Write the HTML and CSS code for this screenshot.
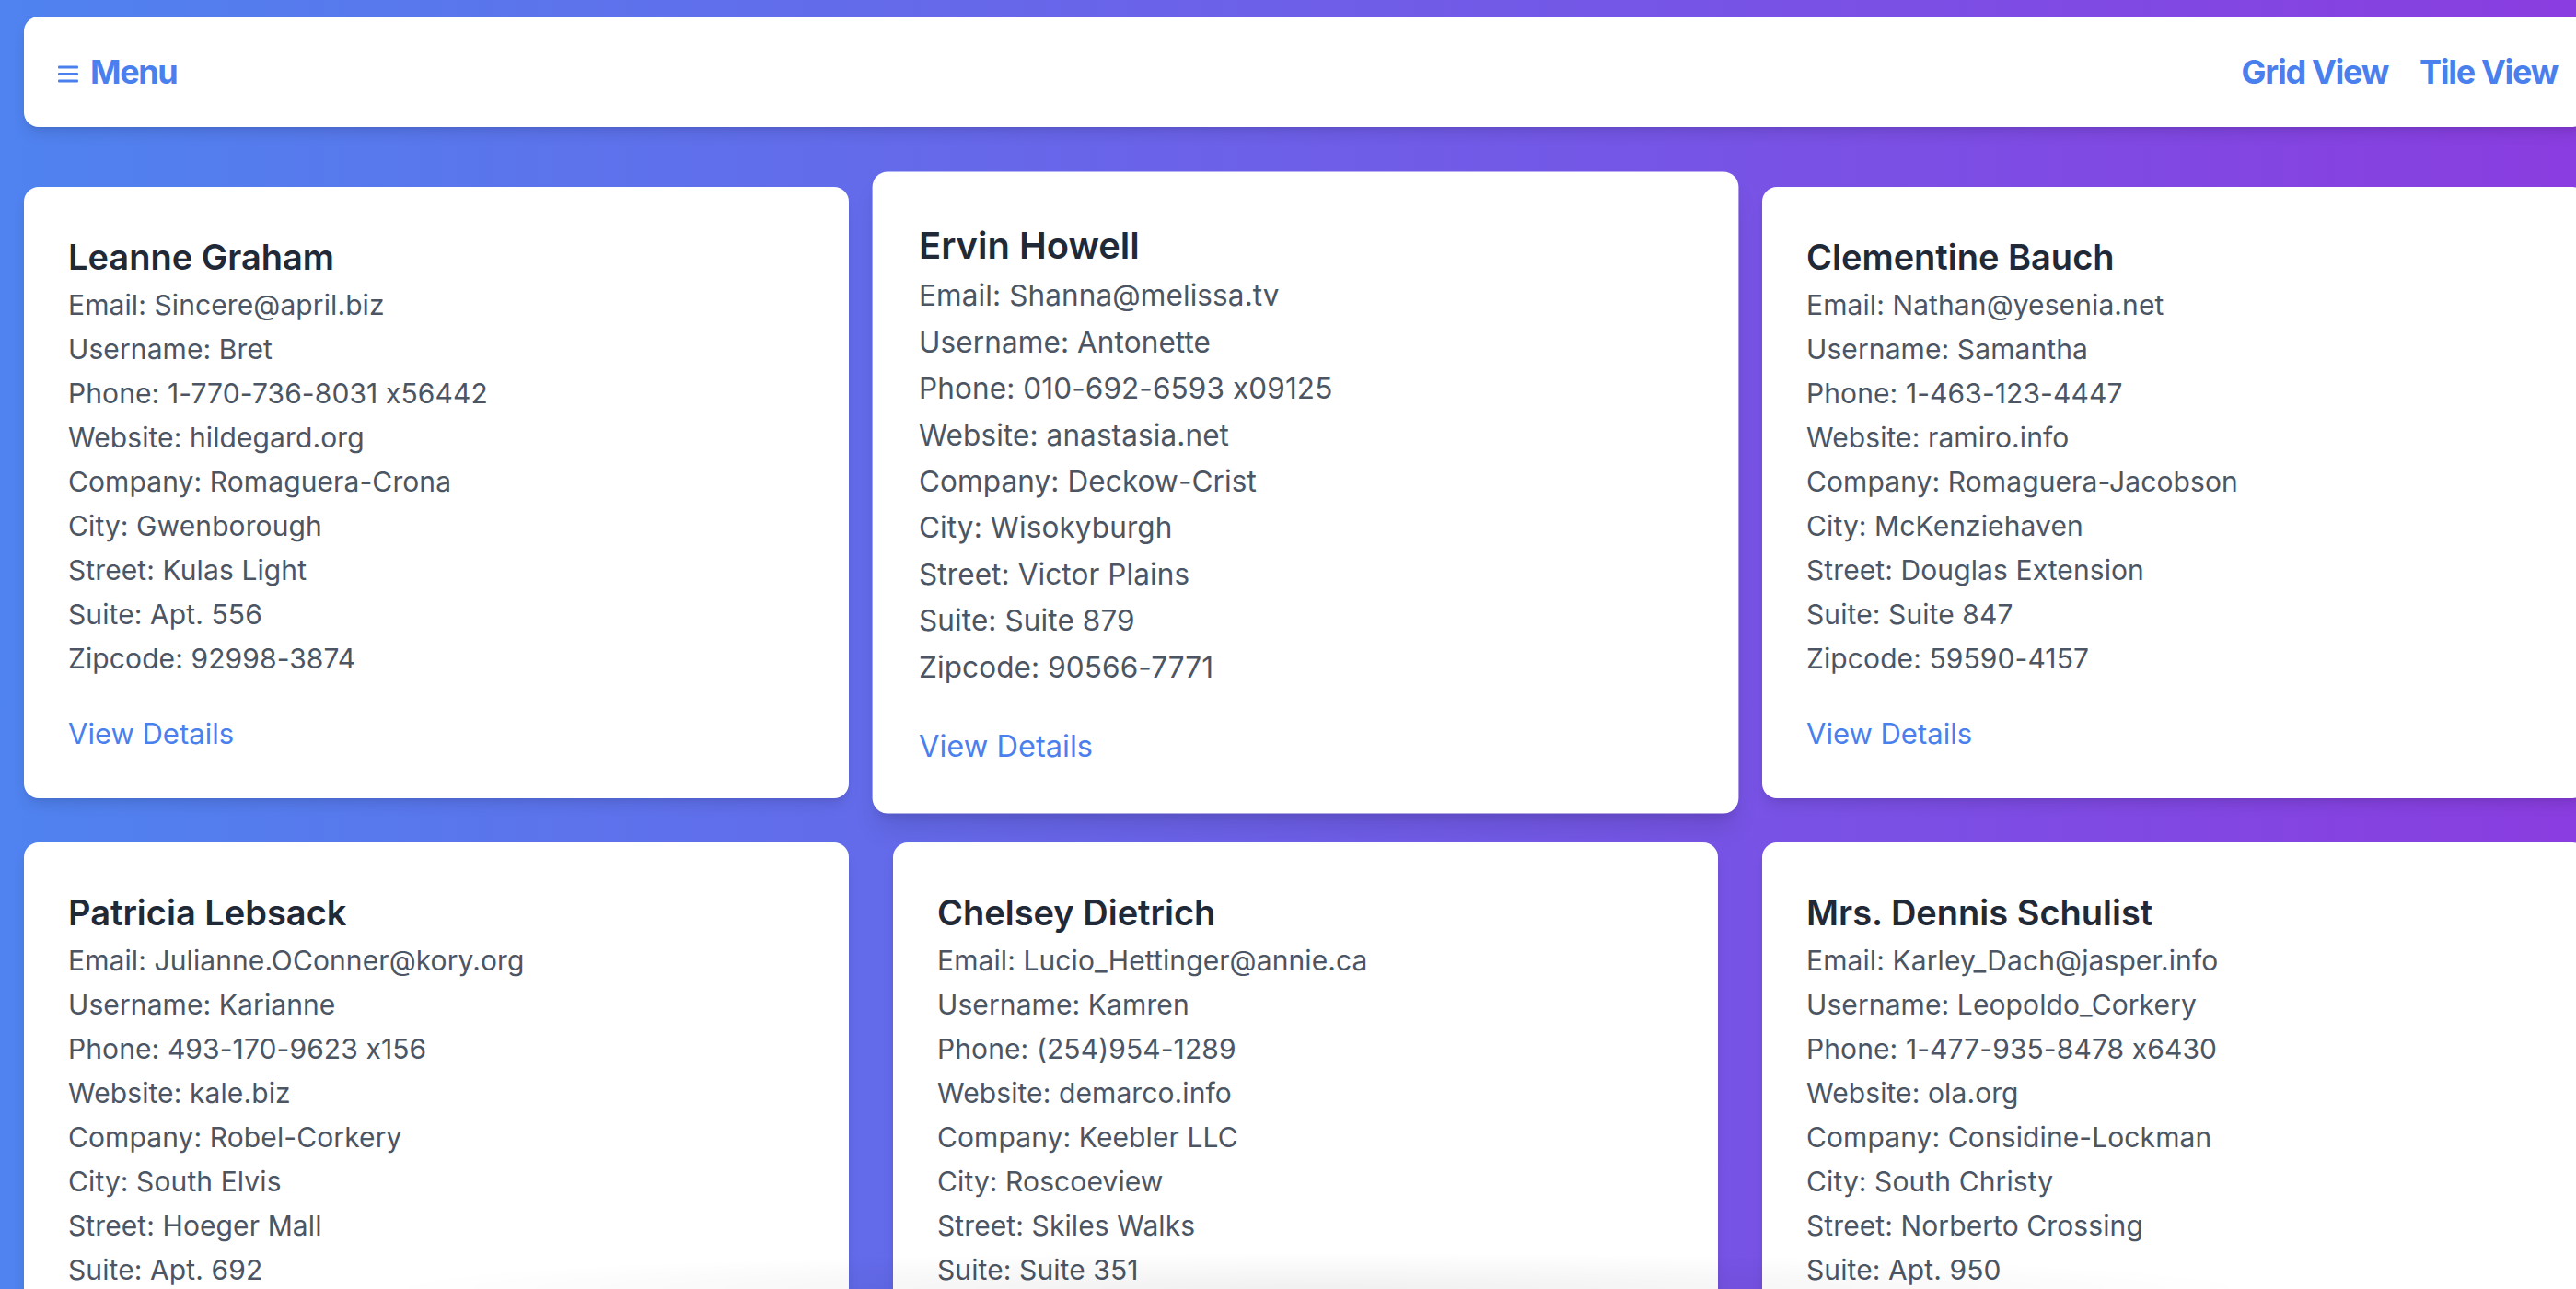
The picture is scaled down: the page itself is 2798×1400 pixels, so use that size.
FILE: index.html
```html
<!DOCTYPE html>
<html lang="en">
<head>
<meta charset="utf-8">
<title>Users</title>
<link rel="stylesheet" href="styles.css">
</head>
<body>
<div class="page">
  <header class="topbar">
    <a class="menu" href="#">
      <svg class="menu-icon" width="22" height="19" viewBox="0 0 22 19" aria-hidden="true">
        <rect x="0" y="0.5" width="22" height="3" rx="1" fill="currentColor"/>
        <rect x="0" y="8" width="22" height="3" rx="1" fill="currentColor"/>
        <rect x="0" y="15.5" width="22" height="3" rx="1" fill="currentColor"/>
      </svg>
      <span>Menu</span>
    </a>
    <nav class="views">
      <a href="#">Grid View</a>
      <a href="#">Tile View</a>
    </nav>
  </header>

  <main class="grid">
    <article class="card">
      <h2 class="name">Leanne Graham</h2>
      <p class="field">Email: Sincere@april.biz</p>
      <p class="field">Username: Bret</p>
      <p class="field">Phone: 1-770-736-8031 x56442</p>
      <p class="field">Website: hildegard.org</p>
      <p class="field">Company: Romaguera-Crona</p>
      <p class="field">City: Gwenborough</p>
      <p class="field">Street: Kulas Light</p>
      <p class="field">Suite: Apt. 556</p>
      <p class="field">Zipcode: 92998-3874</p>
      <a class="details" href="#">View Details</a>
    </article>

    <article class="card card--raised">
      <h2 class="name">Ervin Howell</h2>
      <p class="field">Email: Shanna@melissa.tv</p>
      <p class="field">Username: Antonette</p>
      <p class="field">Phone: 010-692-6593 x09125</p>
      <p class="field">Website: anastasia.net</p>
      <p class="field">Company: Deckow-Crist</p>
      <p class="field">City: Wisokyburgh</p>
      <p class="field">Street: Victor Plains</p>
      <p class="field">Suite: Suite 879</p>
      <p class="field">Zipcode: 90566-7771</p>
      <a class="details" href="#">View Details</a>
    </article>

    <article class="card">
      <h2 class="name">Clementine Bauch</h2>
      <p class="field">Email: Nathan@yesenia.net</p>
      <p class="field">Username: Samantha</p>
      <p class="field">Phone: 1-463-123-4447</p>
      <p class="field">Website: ramiro.info</p>
      <p class="field">Company: Romaguera-Jacobson</p>
      <p class="field">City: McKenziehaven</p>
      <p class="field">Street: Douglas Extension</p>
      <p class="field">Suite: Suite 847</p>
      <p class="field">Zipcode: 59590-4157</p>
      <a class="details" href="#">View Details</a>
    </article>

    <article class="card">
      <h2 class="name">Patricia Lebsack</h2>
      <p class="field">Email: Julianne.OConner@kory.org</p>
      <p class="field">Username: Karianne</p>
      <p class="field">Phone: 493-170-9623 x156</p>
      <p class="field">Website: kale.biz</p>
      <p class="field">Company: Robel-Corkery</p>
      <p class="field">City: South Elvis</p>
      <p class="field">Street: Hoeger Mall</p>
      <p class="field">Suite: Apt. 692</p>
      <p class="field">Zipcode: 53919-4257</p>
      <a class="details" href="#">View Details</a>
    </article>

    <article class="card">
      <h2 class="name">Chelsey Dietrich</h2>
      <p class="field">Email: Lucio_Hettinger@annie.ca</p>
      <p class="field">Username: Kamren</p>
      <p class="field">Phone: (254)954-1289</p>
      <p class="field">Website: demarco.info</p>
      <p class="field">Company: Keebler LLC</p>
      <p class="field">City: Roscoeview</p>
      <p class="field">Street: Skiles Walks</p>
      <p class="field">Suite: Suite 351</p>
      <p class="field">Zipcode: 33263</p>
      <a class="details" href="#">View Details</a>
    </article>

    <article class="card">
      <h2 class="name">Mrs. Dennis Schulist</h2>
      <p class="field">Email: Karley_Dach@jasper.info</p>
      <p class="field">Username: Leopoldo_Corkery</p>
      <p class="field">Phone: 1-477-935-8478 x6430</p>
      <p class="field">Website: ola.org</p>
      <p class="field">Company: Considine-Lockman</p>
      <p class="field">City: South Christy</p>
      <p class="field">Street: Norberto Crossing</p>
      <p class="field">Suite: Apt. 950</p>
      <p class="field">Zipcode: 23505-1337</p>
      <a class="details" href="#">View Details</a>
    </article>
  </main>
</div>
<div class="bottom-shade" aria-hidden="true"></div>
</body>
</html>
```

FILE: styles.css
```css
html {
  overflow: hidden;
  background: linear-gradient(to right, #4f83ef 0%, #6d5fe8 50%, #8a3de0 100%);
  min-height: 100%;
}

body {
  margin: 0;
  font-family: Inter, "Liberation Sans", sans-serif;
  font-feature-settings: "calt" 0;
}

.page {
  width: 2784px;
  padding: 18px 26px 26px;
}

.topbar {
  display: flex;
  justify-content: space-between;
  align-items: center;
  background: #ffffff;
  border-radius: 16px;
  padding: 32px;
  box-shadow: 0 10px 15px -3px rgba(0, 0, 0, 0.1), 0 4px 6px -4px rgba(0, 0, 0, 0.1);
}

.menu {
  display: flex;
  align-items: center;
  gap: 13px;
  color: #4a80ee;
  text-decoration: none;
  font-size: 36px;
  font-weight: 700;
  line-height: 56px;
  letter-spacing: -1.4px;
}

.menu-icon {
  margin-left: 5px;
  margin-top: 5px;
}

.views {
  display: flex;
  gap: 34px;
}

.views a {
  color: #4a80ee;
  text-decoration: none;
  font-size: 36px;
  font-weight: 700;
  line-height: 56px;
  letter-spacing: -1.3px;
}

.grid {
  display: grid;
  grid-template-columns: repeat(3, 896px);
  column-gap: 48px;
  row-gap: 48px;
  margin-top: 65px;
}

.card {
  background: #ffffff;
  border-radius: 16px;
  padding: 48px 48px 46px;
  box-shadow: 0 10px 15px -3px rgba(0, 0, 0, 0.1), 0 4px 6px -4px rgba(0, 0, 0, 0.1);
}

.card--raised {
  transform: scale(1.05);
  box-shadow: 0 20px 25px -5px rgba(0, 0, 0, 0.1), 0 8px 10px -6px rgba(0, 0, 0, 0.1);
}

.name {
  margin: 0;
  font-size: 38px;
  line-height: 56px;
  font-weight: 600;
  color: #1f2937;
}

.field {
  margin: 0;
  font-size: 30px;
  line-height: 48px;
  color: #4b5563;
  letter-spacing: 0.1px;
}

.details {
  display: inline-block;
  margin-top: 34px;
  font-size: 31px;
  line-height: 48px;
  color: #4a80ee;
  text-decoration: none;
}

.bottom-shade {
  position: fixed;
  left: 400px;
  right: 330px;
  bottom: 0;
  height: 40px;
  background: radial-gradient(ellipse at 50% 100%, rgba(0, 0, 0, 0.06), rgba(0, 0, 0, 0) 70%);
  pointer-events: none;
}
```
